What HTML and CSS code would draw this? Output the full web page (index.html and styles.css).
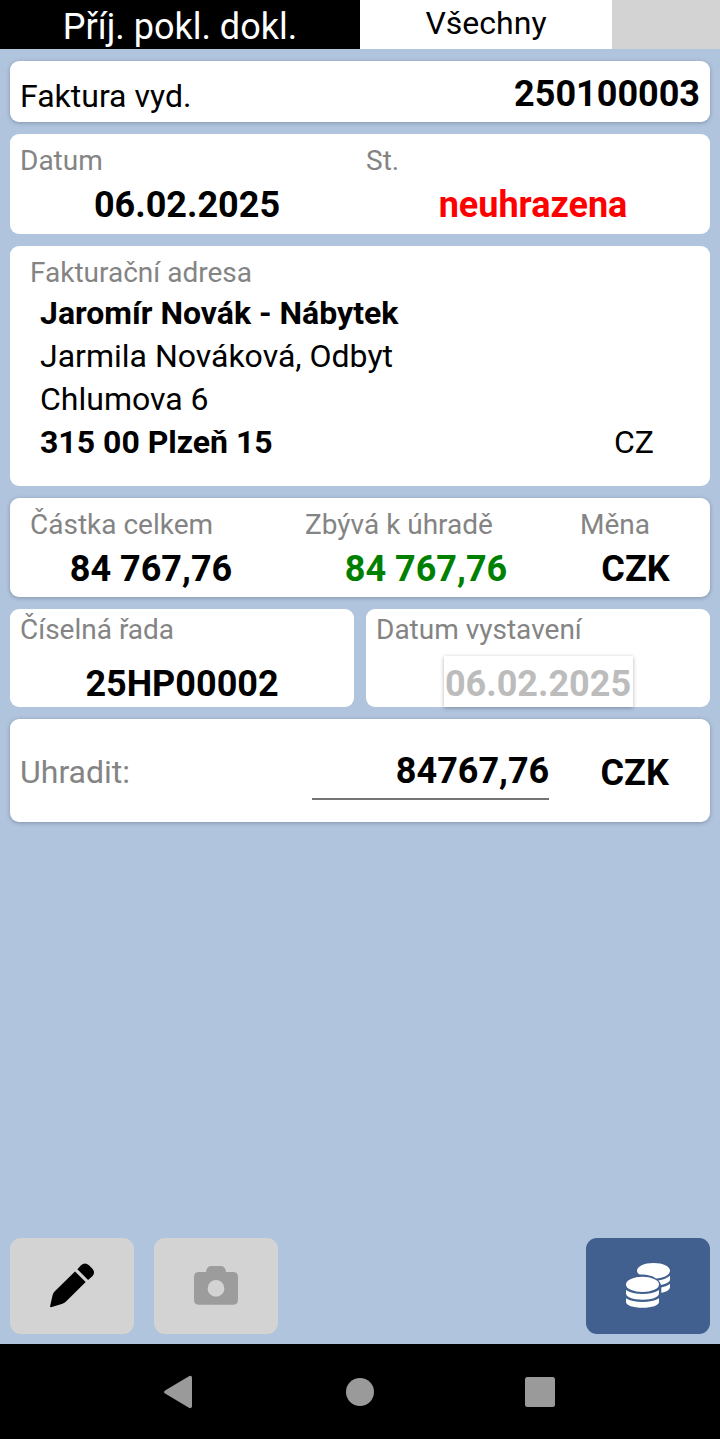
FILE: index.html
```html
<!DOCTYPE html>
<html lang="cs">
<head>
  <meta charset="UTF-8" />
  <title>Příj. pokl. dokl.</title>
  <link rel="stylesheet" href="styles.css">
</head>
<body>
  <header>
    <div class="title">Příj. pokl. dokl.</div>
    <div class="filter">Všechny</div>
    <div class="spare"></div>
  </header>

  <main>
    <section class="card invoice raised">
      <span class="text">Faktura vyd.</span>
      <span class="value">250100003</span>
    </section>

    <section class="card status">
      <div class="field">
        <div class="label">Datum</div>
        <div class="value">06.02.2025</div>
      </div>
      <div class="field">
        <div class="label">St.</div>
        <div class="value unpaid">neuhrazena</div>
      </div>
    </section>

    <section class="card address">
      <div class="label">Fakturační adresa</div>
      <div class="lines">
        <div><b>Jaromír Novák - Nábytek</b></div>
        <div>Jarmila Nováková, Odbyt</div>
        <div>Chlumova 6</div>
        <div class="city"><b>315 00 Plzeň 15</b><span>CZ</span></div>
      </div>
    </section>

    <section class="card amounts raised">
      <div class="field">
        <div class="label">Částka celkem</div>
        <div class="value">84 767,76</div>
      </div>
      <div class="field">
        <div class="label">Zbývá k úhradě</div>
        <div class="value rest">84 767,76</div>
      </div>
      <div class="field">
        <div class="label">Měna</div>
        <div class="value">CZK</div>
      </div>
    </section>

    <div class="row">
      <section class="card half">
        <div class="label">Číselná řada</div>
        <div class="value series">25HP00002</div>
      </section>
      <section class="card half">
        <div class="label">Datum vystavení</div>
        <div class="value date">06.02.2025</div>
      </section>
    </div>

    <section class="card pay raised">
      <label class="text" for="amount">Uhradit:</label>
      <input class="value" type="text" id="amount" value="84767,76">
      <span class="value currency">CZK</span>
    </section>
  </main>

  <div class="toolbar">
    <button title="Upravit">
      <svg width="124" height="96" viewBox="0 0 124 96">
        <path d="M65 33.5 L75.7 44 L56 63.5 Q54.5 65 52.5 65.8 L41 69.3 Q40 69.4 40.1 68.3 L42.6 57 Q43.2 54.8 44.8 53.3 Z M67.4 31.2 L71 27.3 Q74.8 23.8 79 27.2 L82.2 30.5 Q85.8 34.5 82.3 38.2 L78.1 42 Z" fill="#000"/>
      </svg>
    </button>
    <button title="Vyfotit">
      <svg width="124" height="96" viewBox="0 0 124 96">
        <path fill-rule="evenodd" d="M45 34 H51.8 L53 30.5 Q54 28 56.5 28 H67.5 Q70 28 71 30.5 L72.2 34 H79 Q84 34 84 39 V61.8 Q84 66.8 79 66.8 H45 Q40 66.8 40 61.8 V39 Q40 34 45 34 Z M62 42 A8.4 8.4 0 1 0 62 58.8 A8.4 8.4 0 1 0 62 42 Z" fill="#9c9c9c"/>
      </svg>
    </button>
    <button class="primary" title="Uhradit">
      <svg width="124" height="96" viewBox="0 0 124 96" fill="#fff">
        <path d="M51 33 C51 28.5 58 25 67.5 25 C77 25 84 28.5 84 32.5 C84 37 77 40.4 70 40.4 C66 37.3 59 36.3 53.5 36.6 Q51 35 51 33 Z"/>
        <path d="M84 37.8 V41.5 C84 44 80 46 75 47 Q74.5 44 72.3 42.4 Q80 41.3 84 37.8 Z"/>
        <path d="M84 46 V49 C84 52 80 54 75.3 54.8 V49.4 Q81 48.4 84 46 Z"/>
        <ellipse cx="56.5" cy="46.4" rx="16.5" ry="7.6"/>
        <path d="M40 52 Q46 56 56.5 56 Q67 56 73 52 V55.5 C73 59 66 61.7 56.5 61.7 C47 61.7 40 59 40 55.5 Z"/>
        <path d="M40 60.2 Q46 64 56.5 64 Q67 64 73 60.2 V64 C73 67.3 66 69.8 56.5 69.8 C47 69.8 40 67.3 40 64 Z"/>
      </svg>
    </button>
  </div>

  <nav>
    <svg width="720" height="95" viewBox="0 0 720 95" fill="#9a9a9a">
      <path d="M165.5 46.2 L188.5 32.4 Q192 30.8 192 34 V62 Q192 65.2 188.5 63.6 L165.5 49.8 Q162.5 48 165.5 46.2 Z"/>
      <circle cx="360" cy="48" r="14"/>
      <rect x="525" y="33" width="30" height="30" rx="2.5"/>
    </svg>
  </nav>
</body>
</html>
```

FILE: styles.css
```css
* {
  box-sizing: border-box;
}

body {
  margin: 0;
  height: 1439px;
  display: flex;
  flex-direction: column;
  font-family: Roboto, sans-serif;
  font-size: 32px;
  line-height: 38px;
  background: #b0c4de;
  color: #000;
}

header {
  display: flex;
  height: 49px;
}

.title {
  width: 360px;
  padding-top: 6px;
  background: #000;
  color: #fff;
  font-size: 36px;
  line-height: 42px;
  text-align: center;
}

.filter {
  width: 252px;
  padding-top: 4px;
  background: #fff;
  text-align: center;
}

.spare {
  flex: 1;
  background: #d3d3d3;
}

main {
  flex: 1;
  display: flex;
  flex-direction: column;
  gap: 12px;
  padding: 12px 10px;
}

.card {
  background: #fff;
  border-radius: 9px;
}

.raised {
  box-shadow: 0 1px 4px rgba(0, 0, 0, 0.25);
}

.label {
  font-size: 28px;
  line-height: 33px;
  color: #848484;
}

.value {
  font-size: 36px;
  line-height: 42px;
  font-weight: bold;
  text-align: center;
}

.field .value {
  margin-top: 7px;
}

.invoice {
  display: flex;
  justify-content: space-between;
  height: 61px;
  padding: 12px 10px 0;
}

.invoice .text {
  margin-top: 4px;
}

.status {
  display: flex;
  gap: 12px;
  height: 100px;
  padding: 10px 10px 0;
}

.status .field {
  flex: 1;
}

.unpaid {
  color: #f00;
}

.address {
  height: 240px;
  padding: 10px 20px 0;
}

.lines {
  padding: 3px 36px 0 10px;
  line-height: 43px;
}

.city {
  display: flex;
  justify-content: space-between;
}

.amounts {
  display: grid;
  grid-template-columns: 242px 242px 111px;
  column-gap: 33px;
  height: 99px;
  padding: 10px 20px 0;
}

.rest {
  color: #008000;
}

.row {
  display: flex;
  gap: 12px;
}

.half {
  flex: 1;
  height: 98px;
  padding: 4px 10px 0;
}

.series {
  margin-top: 17px;
}

.date {
  width: 189px;
  height: 51px;
  margin: 10px auto 0;
  padding-top: 7px;
  background: #fff;
  color: #bcbcbc;
  box-shadow: 0 1px 4px rgba(0, 0, 0, 0.3);
}

.pay {
  display: flex;
  height: 103px;
  padding: 0 20px 0 10px;
}

.pay label {
  width: 293px;
  padding-top: 34px;
  color: #848484;
}

.pay input {
  width: 237px;
  height: 81px;
  padding: 24px 0 0;
  border: none;
  border-bottom: 2px solid #757575;
  background: none;
  color: #000;
  font-family: inherit;
  text-align: right;
  outline: none;
}

.currency {
  width: 111px;
  margin-left: 30px;
  padding-top: 33px;
}

.toolbar {
  display: flex;
  gap: 20px;
  padding: 0 10px 10px;
}

.toolbar button {
  width: 124px;
  height: 96px;
  padding: 0;
  border: none;
  border-radius: 11px;
  background: #d3d3d3;
}

.toolbar .primary {
  margin-left: auto;
  background: #41608f;
}

svg {
  display: block;
}

nav {
  height: 95px;
  background: #000;
}
```
